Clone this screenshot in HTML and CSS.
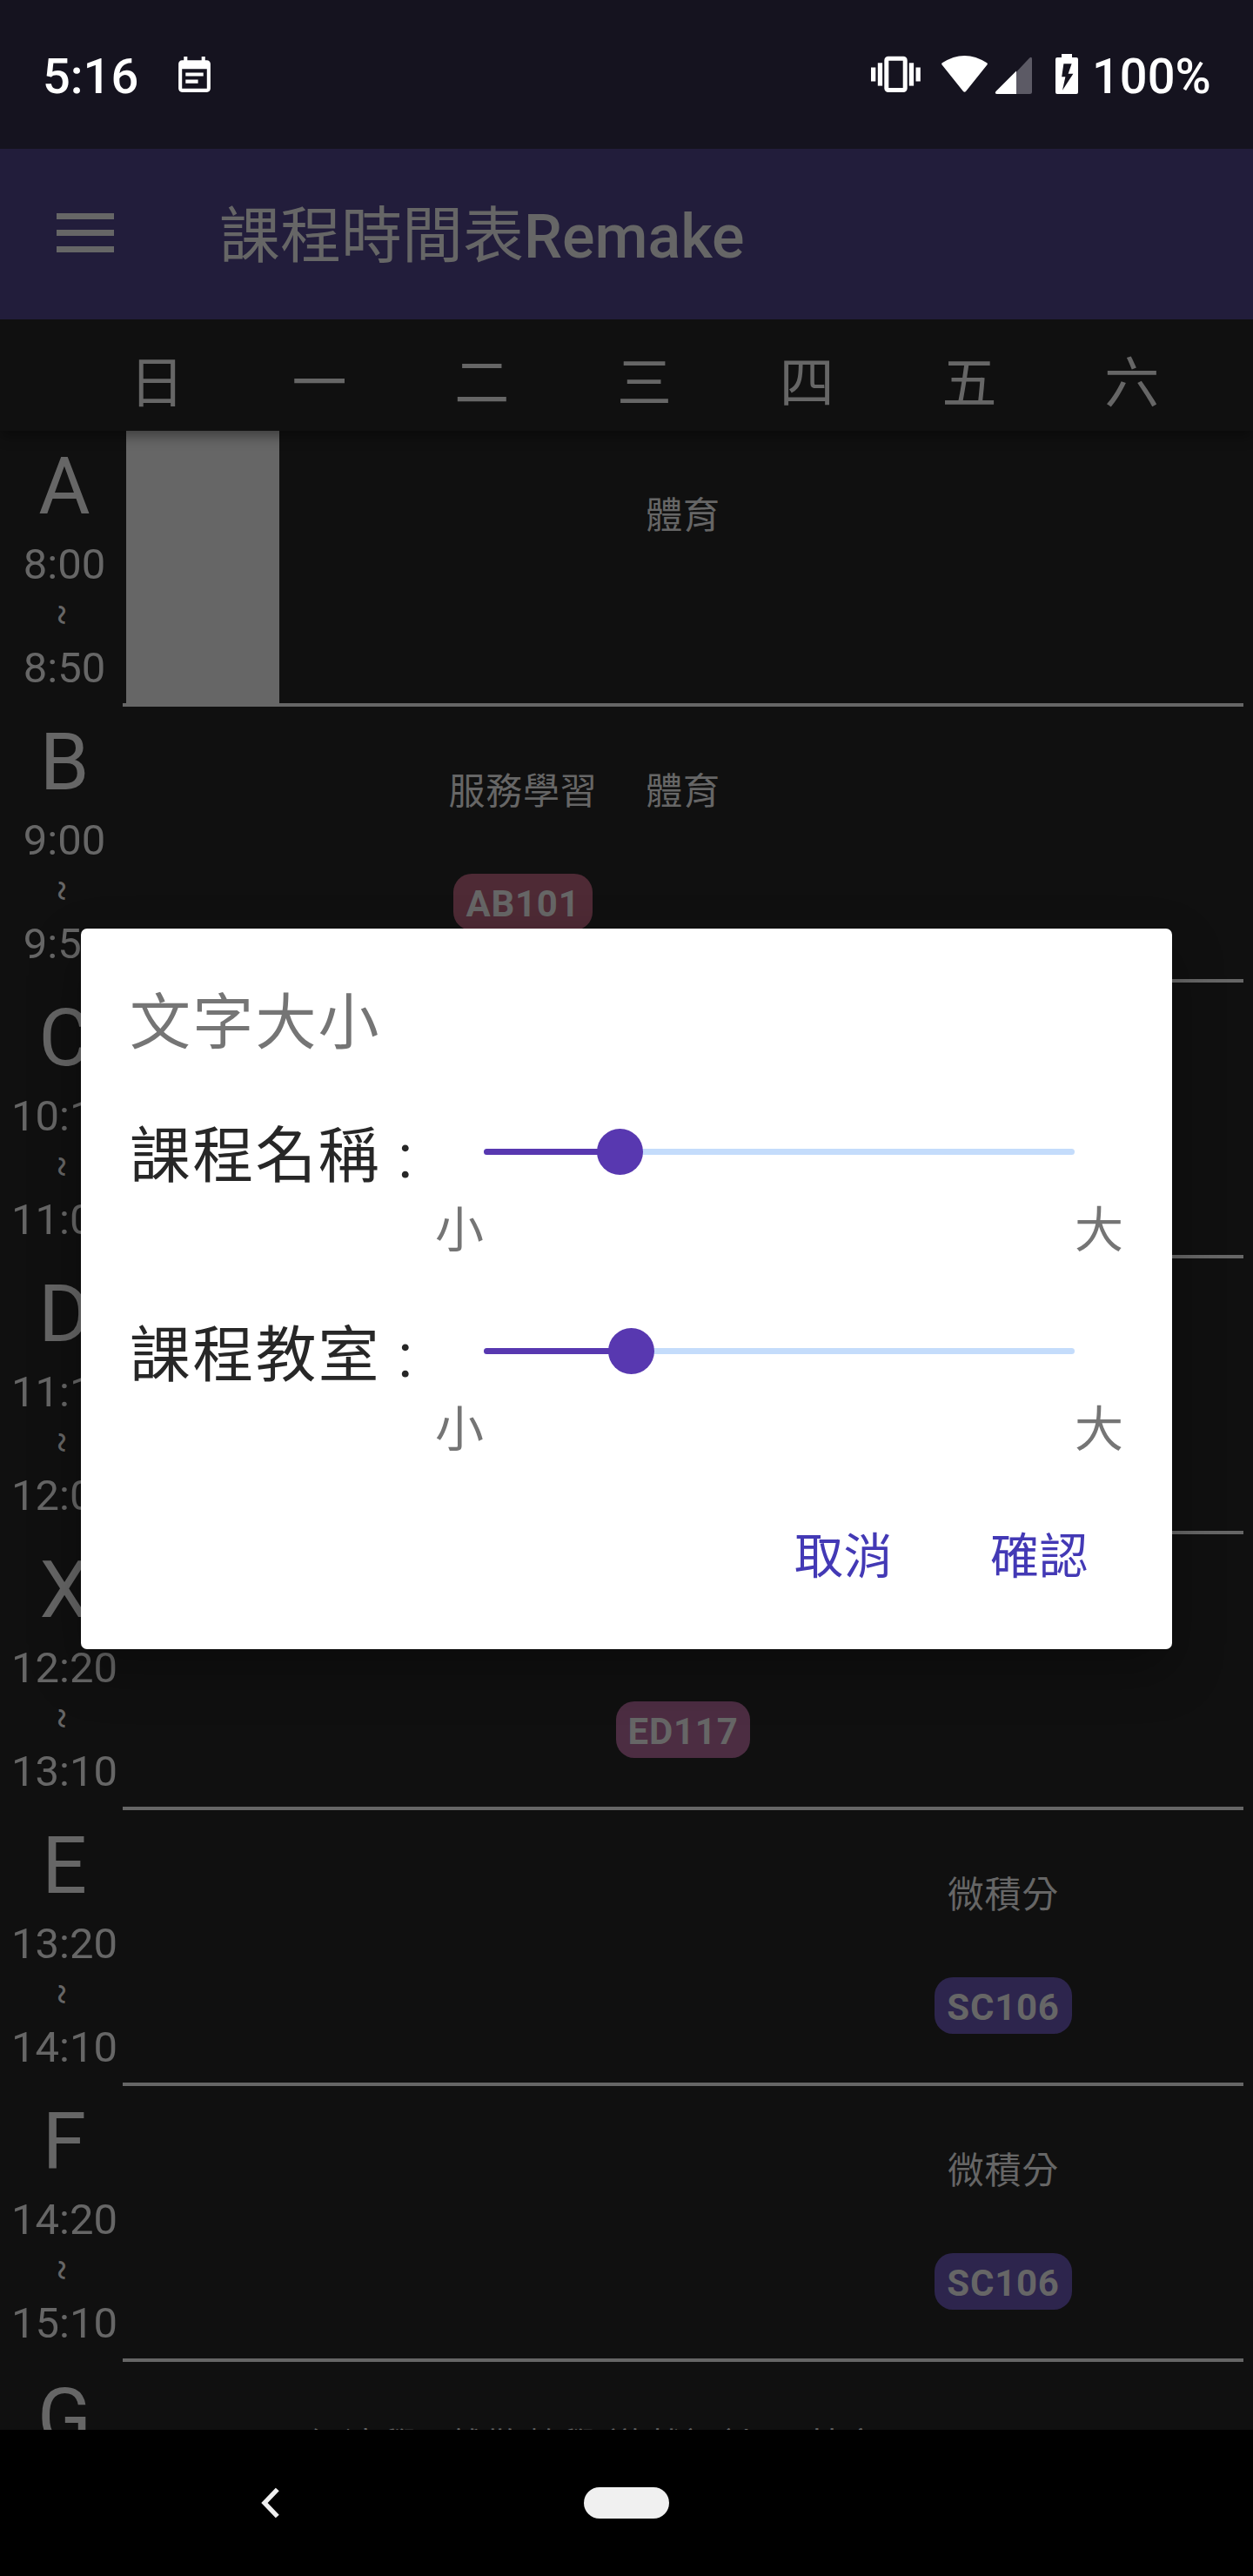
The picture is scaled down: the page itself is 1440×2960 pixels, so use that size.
FILE: index.html
```html
<!DOCTYPE html>
<html lang="zh-Hant">
<head>
<meta charset="utf-8">
<title>課程時間表Remake</title>
<link rel="stylesheet" href="styles.css">
</head>
<body>
<div class="phone">
  <header class="status">
    <div class="status-left">
      <span class="clock">5:16</span>
      <svg class="note-icon" viewBox="0 0 24 24" fill="#fff"><path d="M17 10H7v2h10v-2zm2-7h-1V1h-2v2H8V1H6v2H5c-1.11 0-1.99.9-1.99 2L3 19c0 1.1.89 2 2 2h14c1.1 0 2-.9 2-2V5c0-1.1-.9-2-2-2zm0 16H5V8h14v11zm-5-5H7v2h7v-2z"/></svg>
    </div>
    <div class="status-right">
      <svg class="status-icons" viewBox="1000 60 240 50" fill="#fff">
        <rect x="1000" y="77.5" width="5.3" height="16"/>
        <rect x="1007.8" y="72.3" width="5.3" height="26.3"/>
        <rect x="1017.8" y="67.2" width="21.4" height="36.4" rx="2" fill="none" stroke="#fff" stroke-width="5"/>
        <rect x="1043.8" y="72.3" width="5.3" height="26.3"/>
        <rect x="1051.5" y="77.5" width="5.3" height="16"/>
        <path d="M1081.6 74.6Q1080.6 73.4 1081.8 72.3Q1107.500 55.600 1133.200 72.300Q1134.400 73.400 1133.400 74.600L1109.200 104.700Q1107.500 106.800 1105.800 104.700Z"/>
        <path d="M1167 82.800L1182 66.700Q1185 64.500 1185 68V105.500Q1185 108 1182.500 108H1167Z" fill="#5c5a65"/>
        <path d="M1167 81.500V108H1145Q1141.500 107.500 1143.500 105Z"/>
        <path fill-rule="evenodd" d="M1219 62H1231V66H1236Q1238 66 1238 68V106Q1238 108 1236 108H1214Q1212 108 1212 106V68Q1212 66 1214 66H1219ZM1221.400 73.300L1219.200 88.300H1223.400L1220 103.700L1232.400 84.700H1226.600L1230.600 73.300Z"/>
      </svg>
      <span class="battery-text">100%</span>
    </div>
  </header>

  <div class="appbar">
    <svg class="menu-icon" viewBox="0 0 66 45" fill="#666"><rect width="66" height="7"/><rect y="19" width="66" height="7"/><rect y="38" width="66" height="7"/></svg>
    <h1 class="app-title">課程時間表<span class="latin">Remake</span></h1>
  </div>

  <div class="days"><span>日</span><span>一</span><span>二</span><span>三</span><span>四</span><span>五</span><span>六</span></div>

  <main class="timetable">
    <section class="period">
      <div class="time"><b>A</b><span>8:00</span><i>~</i><span>8:50</span></div>
      <div class="slots"><div class="slot selected"></div><div class="slot"></div><div class="slot"></div><div class="slot"><span class="course">體育</span></div></div>
    </section>
    <section class="period">
      <div class="time"><b>B</b><span>9:00</span><i>~</i><span>9:50</span></div>
      <div class="slots"><div class="slot"></div><div class="slot"></div><div class="slot"><span class="course">服務學習</span><span class="room rose">AB101</span></div><div class="slot"><span class="course">體育</span></div></div>
    </section>
    <section class="period">
      <div class="time"><b>C</b><span>10:10</span><i>~</i><span>11:00</span></div>
      <div class="slots"></div>
    </section>
    <section class="period">
      <div class="time"><b>D</b><span>11:10</span><i>~</i><span>12:00</span></div>
      <div class="slots"></div>
    </section>
    <section class="period">
      <div class="time"><b>X</b><span>12:20</span><i>~</i><span>13:10</span></div>
      <div class="slots"><div class="slot"></div><div class="slot"></div><div class="slot"></div><div class="slot"><span class="course"></span><span class="room plum">ED117</span></div></div>
    </section>
    <section class="period">
      <div class="time"><b>E</b><span>13:20</span><i>~</i><span>14:10</span></div>
      <div class="slots"><div class="slot"></div><div class="slot"></div><div class="slot"></div><div class="slot"></div><div class="slot"></div><div class="slot"><span class="course">微積分</span><span class="room violet">SC106</span></div></div>
    </section>
    <section class="period">
      <div class="time"><b>F</b><span>14:20</span><i>~</i><span>15:10</span></div>
      <div class="slots"><div class="slot"></div><div class="slot"></div><div class="slot"></div><div class="slot"></div><div class="slot"></div><div class="slot"><span class="course">微積分</span><span class="room violet">SC106</span></div></div>
    </section>
    <section class="period">
      <div class="time"><b>G</b></div>
      <div class="slots"><div class="slot"></div><div class="slot"><span class="course">經濟學</span></div><div class="slot"><span class="course">離散數學</span></div><div class="slot"><span class="course">遊戲設計</span></div><div class="slot"><span class="course">英文</span></div></div>
    </section>
  </main>

  <nav class="navbar">
    <svg class="back" viewBox="0 0 22 36"><path d="M18.800 2.500L4 18L18.800 33.500" fill="none" stroke="#f0f0f0" stroke-width="5.400"/></svg>
    <span class="home"></span>
  </nav>

  <div class="dialog" role="dialog">
    <h2 class="dialog-title">文字大小</h2>
    <div class="setting">
      <span class="setting-label">課程名稱 :</span>
      <div class="slider"><div class="track"><div class="fill" style="width:23.1%"><span class="thumb"></span></div></div></div>
      <div class="scale"><span>小</span><span>大</span></div>
    </div>
    <div class="setting">
      <span class="setting-label">課程教室 :</span>
      <div class="slider"><div class="track"><div class="fill" style="width:25.1%"><span class="thumb"></span></div></div></div>
      <div class="scale"><span>小</span><span>大</span></div>
    </div>
    <div class="actions"><button>取消</button><button>確認</button></div>
  </div>
</div>
</body>
</html>
```
FILE: styles.css
```css
* { box-sizing: border-box; }
body { margin: 0; background: #000; }
.phone {
  position: relative;
  display: flex;
  flex-direction: column;
  width: 1440px;
  height: 2960px;
  overflow: hidden;
  background: #101010;
  color: #666;
  font-family: Roboto, "Noto Sans CJK TC", sans-serif;
}

/* status bar */
.status {
  display: flex;
  justify-content: space-between;
  flex: 0 0 171px;
  padding: 52px 50px 0 49px;
  background: #15131f;
  color: #fff;
  font-size: 56px;
  font-weight: 500;
  line-height: 72px;
}
.status-left, .status-right { display: flex; align-items: flex-start; }
.note-icon { width: 49px; height: 49px; margin: 11px 0 0 40px; }
.status-icons { width: 240px; height: 50px; margin: 8px 14px 0 0; }
.battery-text { width: 135px; white-space: nowrap; }

/* app bar */
.appbar {
  display: flex;
  align-items: center;
  flex: 0 0 196px;
  padding-left: 65px;
  background: #221d3b;
}
.menu-icon { width: 66px; height: 45px; margin-top: -3px; }
.app-title { margin: 6px 0 0 121px; font-size: 70px; font-weight: 400; line-height: 90px; }
.latin { font-weight: 500; }

/* weekday header */
.days {
  position: relative;
  z-index: 1;
  display: grid;
  grid-template-columns: repeat(7, 1fr);
  flex: 0 0 128px;
  padding: 34px 46px 0 87px;
  background: #101010;
  box-shadow: 0 8px 14px -2px rgba(0, 0, 0, .4);
  clip-path: inset(0 0 -40px 0);
  font-size: 63px;
  line-height: 80px;
  text-align: center;
}

/* timetable */
.timetable { flex: 1 1 0; min-height: 0; overflow: hidden; }
.period { display: flex; height: 317px; padding-right: 11px; }
.time {
  display: flex;
  flex-direction: column;
  align-items: center;
  flex: 0 0 141px;
  padding: 14px 0 0 7px;
  font-size: 49px;
  line-height: 60px;
}
.time b { margin-bottom: 10px; font-size: 91px; font-weight: 400; line-height: 100px; }
.time i {
  width: 59px;
  height: 59px;
  margin: -2px 0 2px -6px;
  font-size: 38px;
  font-style: normal;
  line-height: 59px;
  text-align: center;
  transform: rotate(90deg);
}
.slots {
  display: grid;
  grid-template-columns: repeat(7, 184px);
  flex: 1;
  border-bottom: 4px solid #666;
}
.slot { display: flex; flex-direction: column; align-items: center; padding-top: 68px; }
.selected { margin: 0 4px; background: #666; }
.course { height: 60px; font-size: 42px; letter-spacing: .75px; line-height: 60px; white-space: nowrap; }
.room {
  height: 65px;
  margin-top: 64px;
  padding: 2px 14px 0;
  border-radius: 21px;
  font-size: 42px;
  font-weight: 700;
  letter-spacing: .75px;
  line-height: 65px;
}
.rose { background: #4e2a35; }
.plum { background: #4c2d42; }
.violet { background: #2d254d; }

/* navigation bar */
.navbar { display: flex; align-items: center; flex: 0 0 168px; padding-left: 300px; background: #000; }
.back { width: 22px; height: 36px; }
.home { width: 98px; height: 36px; margin-left: 349px; border-radius: 18px; background: #f0f0f0; }

/* dialog */
.dialog {
  position: absolute;
  z-index: 2;
  top: 1067px;
  left: 93px;
  width: 1254px;
  height: 828px;
  padding: 69px 56px 0;
  border-radius: 7px;
  background: #fff;
  box-shadow: 0 24px 60px rgba(0, 0, 0, .3);
}
.dialog-title {
  margin: 0 0 73px;
  color: #757575;
  font-size: 70px;
  font-weight: 400;
  letter-spacing: 2.2px;
  line-height: 80px;
}
.setting {
  display: grid;
  grid-template-columns: 351px 791px;
  grid-template-rows: 80px 80px;
  height: 229px;
}
.setting-label { color: #272727; font-size: 70px; letter-spacing: 2.2px; line-height: 80px; white-space: nowrap; }
.slider { display: flex; align-items: center; height: 69px; padding: 0 56px; }
.track { width: 679px; height: 7px; border-radius: 4px; background: #c4dcfb; }
.fill { display: flex; align-items: center; justify-content: flex-end; height: 7px; border-radius: 4px; background: #5838b0; }
.thumb { flex: none; width: 53px; height: 53px; margin-right: -26px; border-radius: 50%; background: #5838b0; }
.scale {
  grid-column: 2;
  display: flex;
  justify-content: space-between;
  padding-top: 10px;
  color: #757575;
  font-size: 56px;
  line-height: 70px;
}
.actions { display: flex; justify-content: flex-end; gap: 112px; padding-right: 40px; }
.actions button {
  padding: 0;
  border: 0;
  background: none;
  color: #4339b5;
  font: inherit;
  font-size: 56px;
  letter-spacing: .5px;
  line-height: 84px;
}
```
